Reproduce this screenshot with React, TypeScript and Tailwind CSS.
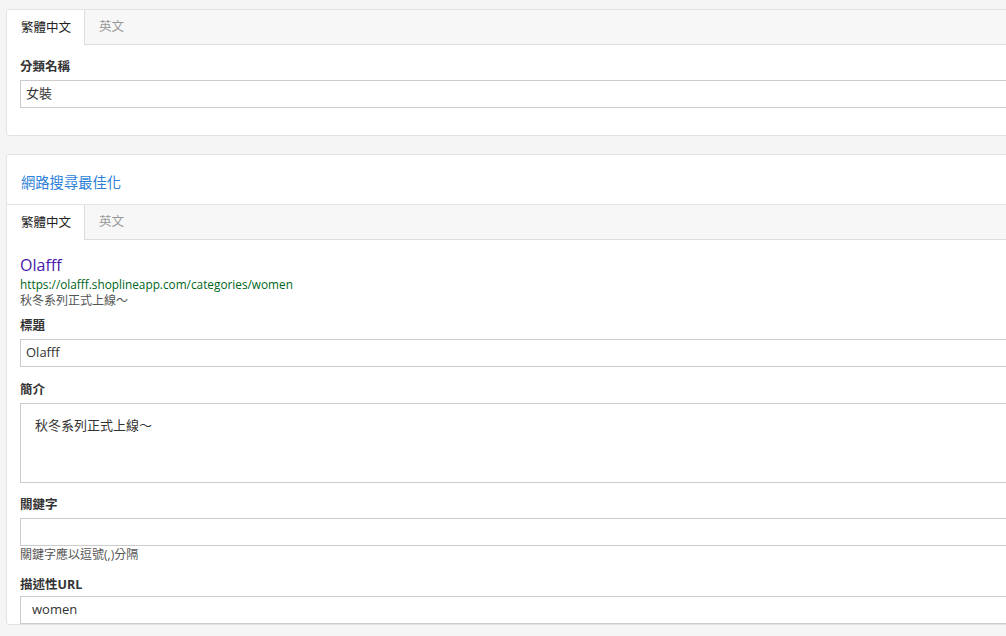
import React from 'react';

const font = { fontFamily: '"Open Sans", "Noto Sans CJK TC", sans-serif' };

function Tabs() {
  return (
    <div className="flex h-[35px] bg-[#f7f7f7] border-b border-[#dddddd]">
      <div className="w-[78px] h-[35px] bg-white border-r border-[#dddddd] flex items-center pl-[14px] pt-[1px] text-[12.5px] text-[#222]">
        繁體中文
      </div>
      <div className="flex items-center pl-[14px] pt-[1px] text-[12.5px] text-[#999]">英文</div>
    </div>
  );
}

function Label({ children, mb = 'mb-[4px]' }: { children: React.ReactNode; mb?: string }) {
  return <div className={`text-[12.5px] leading-[18px] font-bold text-[#333] ${mb}`}>{children}</div>;
}

function Input({ value, pl = 'pl-[5px]' }: { value?: string; pl?: string }) {
  return (
    <div className={`h-[28px] border border-[#cccccc] bg-white flex items-center text-[13px] text-[#333] ${pl}`}>
      {value}
    </div>
  );
}

export default function App() {
  return (
    <div className="min-h-screen w-[1006px] h-[636px] overflow-hidden bg-[#f5f5f5] pl-[6px] pt-[9px]" style={font}>
      {/* Category name panel */}
      <div className="w-[1100px] bg-white border border-[#e3e3e3] rounded-[3px]">
        <Tabs />
        <div className="px-[13px] pt-[13px] pb-[27px]">
          <Label>分類名稱</Label>
          <Input value="女裝" />
        </div>
      </div>

      {/* SEO panel */}
      <div className="w-[1100px] mt-[18px] bg-white border border-[#e3e3e3] rounded-[3px]">
        <div className="h-[50px] border-b border-[#e3e3e3] px-[14px] pt-[18px] text-[14.3px] leading-[20px] text-[#2d7fd8]">
          網路搜尋最佳化
        </div>
        <Tabs />
        <div className="px-[13px] pt-[14px]">
          <div className="text-[16px] leading-[22px] text-[#4a16ab]">Olafff</div>
          <div className="text-[11.8px] leading-[17px] text-[#006621]">https://olafff.shoplineapp.com/categories/women</div>
          <div className="text-[12px] leading-[16px] text-[#545454]">秋冬系列正式上線～</div>

          <div className="mt-[8px]">
            <Label>標題</Label>
            <Input value="Olafff" />
          </div>

          <div className="mt-[14px]">
            <Label>簡介</Label>
            <div className="h-[80px] border border-[#cccccc] pl-[14px] pt-[12px] text-[13px] leading-[18px] text-[#333]">
              秋冬系列正式上線～
            </div>
          </div>

          <div className="mt-[13px]">
            <Label>關鍵字</Label>
            <Input />
            <div className="text-[12px] leading-[17px] text-[#555] mb-[13px]">關鍵字應以逗號(,)分隔</div>
          </div>

          <div>
            <Label mb="mb-[2px]">描述性URL</Label>
            <Input value="women" pl="pl-[11px]" />
          </div>
        </div>
      </div>
    </div>
  );
}
